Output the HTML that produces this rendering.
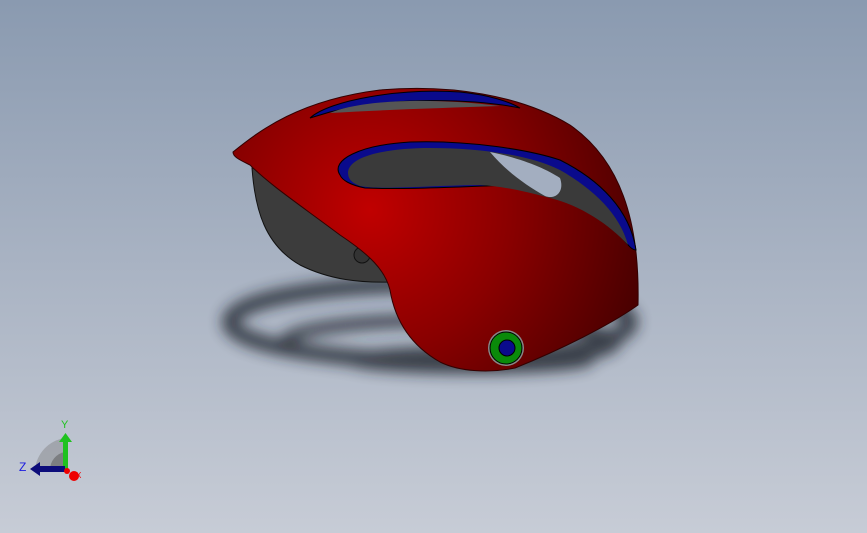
<!DOCTYPE html><html><head><style>html,body{margin:0;padding:0}body{width:867px;height:533px;overflow:hidden;background:linear-gradient(#8a9ab0,#a9b3c3 50%,#c7ccd6)}</style></head><body>
<svg width="867" height="533" viewBox="0 0 867 533" style="position:absolute;left:0;top:0">
<defs>
<radialGradient id="r" cx="370" cy="210" r="280" gradientUnits="userSpaceOnUse"><stop offset="0" stop-color="#c00000"/><stop offset="0.5" stop-color="#8a0000"/><stop offset="1" stop-color="#4a0000"/></radialGradient>
<filter id="b" x="-20%" y="-50%" width="140%" height="200%"><feGaussianBlur stdDeviation="7"/></filter>
</defs>
<g filter="url(#b)" fill="none" stroke="#1e232b" opacity="0.8">
<ellipse cx="430" cy="322" rx="200" ry="38" stroke-width="16"/>
<ellipse cx="450" cy="342" rx="165" ry="22" stroke-width="12"/>
<ellipse cx="470" cy="360" rx="120" ry="10" stroke-width="8"/>
</g>
<path d="M252,168 C255,210 265,245 300,265 C330,280 360,283 395,282 L400,240 L300,180 Z" fill="#3c3c3c" stroke="#111" stroke-width="1"/>
<circle cx="362" cy="255" r="8" fill="#333" stroke="#111"/>
<path d="M233,152 C260,130 300,100 380,90 C450,84 520,95 570,125 C620,160 640,220 638,305 C610,325 560,350 515,368 C490,373 460,372 440,362 C410,345 395,320 390,290 C385,270 370,255 340,235 C300,205 270,185 250,165 C240,160 233,157 233,152 Z" fill="url(#r)" stroke="#300" stroke-width="1"/>
<path d="M310,118 C330,100 400,88 460,92 C490,95 510,102 520,108 C480,100 400,95 330,112 Z" fill="#0a0a8c" stroke="#000" stroke-width="1"/>
<path d="M330,113 C360,100 430,97 500,106 C440,108 380,110 330,113 Z" fill="#555"/>
<path d="M340,175 C330,160 360,145 410,142 C470,140 530,150 560,160 C600,180 630,210 636,250 C630,250 625,240 615,230 C590,200 560,185 520,185 C470,186 410,190 365,188 C350,185 342,180 340,175 Z" fill="#0a0a8c" stroke="#000" stroke-width="1"/>
<path d="M348,172 C350,155 390,148 430,148 C480,148 530,155 560,170 C595,190 620,215 628,245 C610,225 580,205 550,198 C520,190 500,186 480,185 C420,186 380,190 360,186 C350,182 348,178 348,172 Z" fill="#3a3a3a"/>
<path d="M490,152 C520,158 545,168 560,178 C565,192 555,200 545,196 C525,185 505,170 490,152 Z" fill="#a3aec0"/>
<circle cx="506" cy="348" r="18" fill="#888"/>
<circle cx="506" cy="348" r="16" fill="#0a8a0a" stroke="#000" stroke-width="1"/>
<circle cx="507" cy="348" r="8" fill="#0a0a8c" stroke="#000" stroke-width="1"/>
<g>
<path d="M35,470 A35,35 0 0 1 65,438 L65,470 Z" fill="#777" opacity="0.4"/>
<path d="M50,470 A18,18 0 0 1 65,452 L65,470 Z" fill="#555" opacity="0.5"/>
<rect x="63" y="440" width="5" height="30" fill="#1fc21f"/><path d="M59,442 L65.5,433 L72,442 Z" fill="#1fc21f"/>
<rect x="38" y="466" width="27" height="6" fill="#0c0c7a"/><path d="M40,462 L30,469 L40,476 Z" fill="#0c0c7a"/>
<circle cx="74" cy="476" r="5" fill="#e00"/><circle cx="67" cy="471" r="3" fill="#e00"/>
<text x="61" y="428" font-family="Liberation Sans,sans-serif" font-size="11" fill="#1fc21f">Y</text>
<text x="19" y="471" font-family="Liberation Sans,sans-serif" font-size="12" fill="#1a1ae0">Z</text>
<text x="76" y="478" font-family="Liberation Sans,sans-serif" font-size="8" fill="#e00">X</text>
</g>
</svg></body></html>
